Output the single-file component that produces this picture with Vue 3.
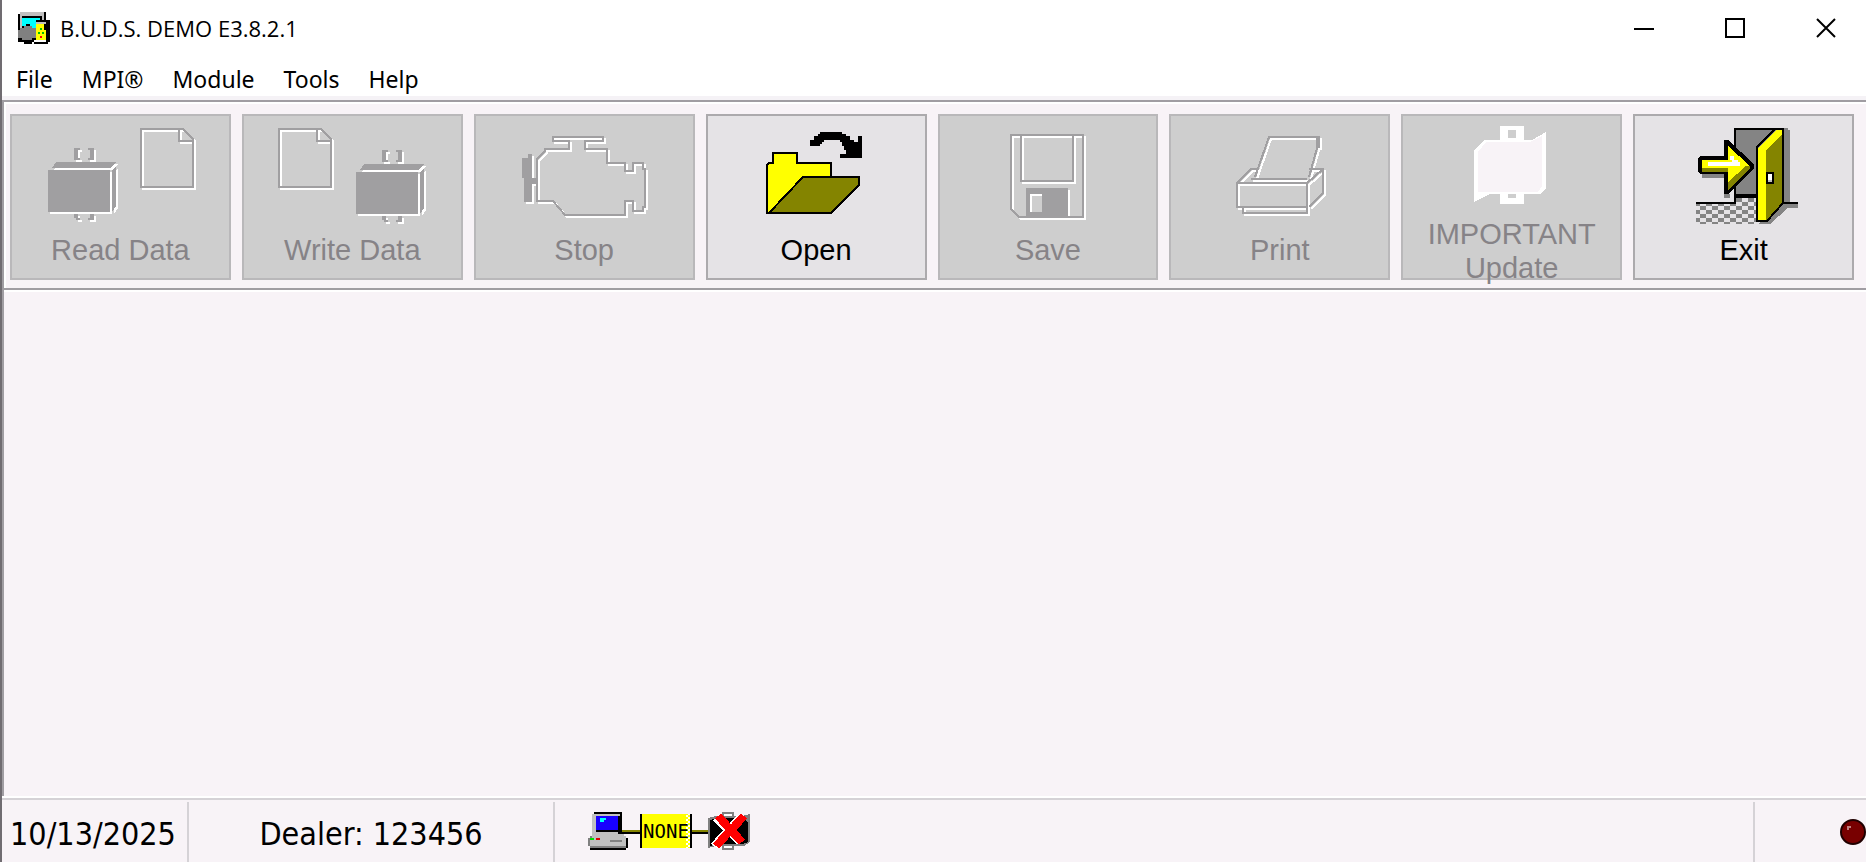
<!--
  App.vue: B.U.D.S. main window
  title bar, menu, toolbar, empty workspace and status bar
-->

<template>
  <div class="window">
    <!-- title bar -->
    <header class="title-bar">
      <svg class="app-icon" viewBox="0 0 16 16" shape-rendering="crispEdges" aria-hidden="true">
        <path fill="#000" d="M0 1H1V0H14V4H16V15H15V16H8V15H7V16H3V15H0Z" />
        <path fill="#c0c0c0" d="M1 0H13V4H12V2H2V8H1Z" />
        <path fill="#00ffff" d="M2 3H11V4H9V8H6V6H4V7H2Z" />
        <path fill="#808080" d="M1 8H3V7H7V8H9V13H7V14H2V13H0V9H1Z" />
        <path fill="#c0c0c0" d="M9 5H14V6H9Z" />
        <path fill="#ffff00" d="M9 6H13V9H14V14H9Z" />
        <path fill="#fff" d="M8 14H14V15H8Z" />
        <path fill="#00c000" d="M11 8H12V9H11ZM10 10H11V11H10ZM12 10H13V11H12Z" />
        <path fill="#ff0000" d="M11 12H12V13H11Z" />
      </svg>
      <h1>B.U.D.S. DEMO E3.8.2.1</h1>
      <div class="window-controls">
        <button type="button" aria-label="Minimize">
          <svg viewBox="0 0 20 20" shape-rendering="crispEdges"><path d="M0 11H20" /></svg>
        </button>
        <button type="button" aria-label="Maximize">
          <svg viewBox="0 0 20 20" shape-rendering="crispEdges"><path d="M1 1H19V19H1Z" /></svg>
        </button>
        <button type="button" aria-label="Close">
          <svg viewBox="0 0 20 20"><path d="M1 1L19 19M19 1L1 19" /></svg>
        </button>
      </div>
    </header>

    <!-- menu -->
    <nav class="menu-bar">
      <button v-for="item in menuItems" :key="item" type="button">{{ item }}</button>
    </nav>

    <!-- toolbar -->
    <div class="toolbar">
      <button
        v-for="tool in tools"
        :key="tool.key"
        type="button"
        class="tool"
        :class="{ 'two-lines': tool.key === 'update' }"
        :disabled="!tool.enabled"
      >
        <svg class="tool-icon" viewBox="1 1 108 56" shape-rendering="crispEdges" aria-hidden="true">
          <!-- disabled glyphs: white copy one step down-right, gray on top -->
          <template v-if="tool.parts">
            <g
              v-for="(part, i) in tool.parts"
              :key="i"
              :transform="`translate(${part.x} ${part.y})`"
            >
              <g class="emboss-light" transform="translate(1 1)">
                <path class="solid" :d="part.glyph.solid" />
                <path class="line" :d="part.glyph.line" />
              </g>
              <g class="emboss-dark">
                <path class="solid" :d="part.glyph.solid" />
                <path class="line" :d="part.glyph.line" />
              </g>
            </g>
          </template>

          <g v-else-if="tool.key === 'open'" stroke="#000">
            <path fill="#ffff00" d="M30.5 49.5V25.5L31.5 24.5H33.5V19.5H45.5V24.5H62.5V31.5H48.5L31.5 49.5Z" />
            <path fill="#848400" d="M31.5 49.5L48.5 31.5H76.5V35.5L62.5 49.5Z" />
            <path
              fill="#000"
              stroke="none"
              d="M52 16V13H54V11H56V10H57V9H68V10H70V11H72V13H74V14H76V11H78V22H67V20H70V18H69V16H68V14H67V13H59V14H58V15H57V16Z"
            />
          </g>

          <g v-else-if="tool.key === 'update'" fill-rule="evenodd">
            <path
              fill="#fff"
              d="M49 6H61V13H65L72 9V37L69 40H61V45H49V40H44L36 44V18L41 13H49ZM53 8V12H57V8ZM53 40V42H57V40Z"
            />
            <path fill="#f8f3f7" d="M38 19L42 14H64L70 11V36L68 39H38Z" />
          </g>

          <g v-else>
            <defs>
              <pattern id="floor" width="6" height="4" patternUnits="userSpaceOnUse">
                <path fill="#e5e3e6" d="M0 0H6V4H0Z" />
                <path fill="#848484" d="M0 0H3V2H0ZM3 2H6V4H3Z" />
              </pattern>
            </defs>
            <path fill="url(#floor)" d="M31 45H51V42H62V55H31Z" />
            <path fill="#848484" d="M75 7H77V8H78V44H82V47H77L68 55H62L75 44Z" />
            <path fill="#848484" stroke="#000" d="M50.5 44.5V7.5H74.5V40.5H50.5" />
            <path fill="#000" d="M51 40H62V42H51ZM31 44H51V45H31ZM75 44H82V45H75Z" />
            <!-- door -->
            <path fill="#848400" d="M66 17L74 8V45L66 53Z" />
            <path fill="#ffff00" d="M62 17L71 8H74V10L66 18V53H62Z" />
            <path fill="none" stroke="#000" d="M61.5 53.5V16.5L70.5 7.5H74.5V44.5L66.5 53.5Z" />
            <path fill="#000" d="M66 29H70V35H66Z" />
            <path fill="#fff" d="M67 30H69V33H67Z" />
            <path fill="#c0c0c0" d="M67 33H69V34H67Z" />
            <!-- arrow -->
            <path fill="#848484" d="M34 30H45V32H34ZM45 40H48V42H45Z" />
            <path fill="#000" d="M32 22L33 21H45V13H47L60 25V27L47 40H45V30H33L32 29Z" />
            <path fill="#ffff00" d="M34 23H47V16L58 26L47 37V28H34Z" />
            <path fill="#848400" d="M34 27H47V34L56 26H58V27L47 38V29H34Z" />
            <path fill="#fff" d="M37 24H49V23H48V21H50V23H52V24H53V26H37Z" />
          </g>
        </svg>
        <span class="tool-label">{{ tool.label }}</span>
      </button>
    </div>

    <main class="workspace"></main>

    <!-- status bar -->
    <footer class="status-bar">
      <div class="panel date">10/13/2025</div>
      <div class="panel dealer">Dealer: 123456</div>
      <div class="panel connection">
        <svg class="computer" viewBox="0 0 26 19" shape-rendering="crispEdges" aria-hidden="true">
          <path fill="#c0c0c0" d="M2 1H17V11H2Z" />
          <path fill="#000" d="M3 0H17V11H4V10H16V1H3ZM4 2H16V10H4Z" />
          <path fill="#1800ff" d="M4 2H15V9H4Z" />
          <path fill="#00ffff" d="M6 3H9V4H8V5H6Z" />
          <path fill="#c0c0c0" d="M2 10H15V11H2Z" />
          <path fill="#808080" d="M1 12H19V18H1ZM0 13H1V17H0Z" />
          <path fill="#c0c0c0" d="M2 11H18V12H19V17H1V13H2Z" />
          <path fill="#000" d="M19 13H20V18H19V19H1V18H19Z" />
          <path fill="#00e000" d="M1 13H3V14H1Z" />
          <path fill="#e00000" d="M4 13H6V14H4Z" />
          <path fill="#808080" d="M11 14H17V15H11Z" />
          <path fill="#848400" d="M17 9H26V10H17Z" />
          <path fill="#000" d="M17 10H26V11H17Z" />
        </svg>
        <span class="adapter">NONE</span>
        <svg class="module" viewBox="0 0 29 19" shape-rendering="crispEdges" aria-hidden="true">
          <path fill="#848400" d="M0 9H8V10H0Z" />
          <path fill="#000" d="M0 10H8V11H0Z" />
          <path fill="#808080" d="M8 3L12 2H25L29 1V15L26 17H12L8 18Z" />
          <path fill="#000" d="M9 4L12 3H25L28 5V15L25 16H12L9 17Z" />
          <path fill="#808080" d="M15 0H21V3H15ZM15 16H21V19H15Z" />
          <path fill="#fff" d="M16 1H20V2H16ZM16 17H20V18H16Z" />
          <path stroke="#fff" stroke-width="4" d="M12 3L24 15M24 3L11 17" />
          <path stroke="#ff0000" stroke-width="4" d="M13 2L25 15M26 2L12 17" />
        </svg>
      </div>
      <div class="panel led">
        <svg viewBox="0 0 26 28" role="img" aria-label="Communication">
          <circle cx="13" cy="14" r="12" fill="#780000" stroke="#200000" stroke-width="2" />
          <path fill="#c08080" d="M7 8H11V10H9V12H7Z" />
        </svg>
      </div>
    </footer>
  </div>
</template>

<script setup>
const menuItems = ['File', 'MPI®', 'Module', 'Tools', 'Help']

// Glyphs are drawn on a grid where one unit is two pixels
const page = {
  solid: '',
  line: 'M.5 .5H21.5L26.5 5.5V29.5H.5ZM19.5 .5V6.5H26.5'
}

const chip = {
  solid:
    'M4 7H34L31 10H2ZM0 11H31V32H0ZM32 11L34 9V29L32 32Z' +
    'M13 0H16V1H15V5H16V6H13ZM20 0H23V6H20V5H21V1H20Z' +
    'M13 33H15V35H16V36H14V35H13ZM21 33H23V36H20V35H21Z',
  line: ''
}

const engine = {
  solid: 'M27 20H29V32H31V35H29V44H25V32H24V22H27Z',
  line:
    'M39.5 11.5H64.5V13.5H55.5V17.5H66.5V24.5H75.5V28.5H79.5V24.5H84.5V27.5H85.5V46.5H84.5V48.5' +
    'H79.5V43.5H75.5V50.5H45.5L39.5 43.5H31.5V22.5L35.5 18.5V17.5H47.5V13.5H39.5Z'
}

const floppy = {
  solid: 'M44 37H65V51H44ZM46 40V49H52V40Z',
  line: 'M36.5 10.5H72.5V51.5H40.5L36.5 47.5ZM41.5 10.5V33.5H67.5V10.5'
}

const printer = {
  solid: 'M73 12H75V17H73Z',
  line:
    'M33.5 34.5H68.5V46.5H33.5ZM36.5 46.5V49.5H68.5V46.5M33.5 34.5L40.5 27.5H43.5M40.5 32.5H68.5' +
    'M42.5 31.5L49.5 11.5H74.5V13.5L69.5 31.5M69.5 27.5H76.5V39.5L69.5 46.5M68.5 34.5L76.5 27.5'
}

const tools = [
  { key: 'read', label: 'Read Data', parts: [{ glyph: chip, x: 19, y: 17 }, { glyph: page, x: 65, y: 7 }] },
  { key: 'write', label: 'Write Data', parts: [{ glyph: page, x: 18, y: 7 }, { glyph: chip, x: 57, y: 18 }] },
  { key: 'stop', label: 'Stop', parts: [{ glyph: engine, x: 0, y: 0 }] },
  { key: 'open', label: 'Open', enabled: true },
  { key: 'save', label: 'Save', parts: [{ glyph: floppy, x: 0, y: 0 }] },
  { key: 'print', label: 'Print', parts: [{ glyph: printer, x: 0, y: 0 }] },
  { key: 'update', label: 'IMPORTANT Update' },
  { key: 'exit', label: 'Exit', enabled: true }
]
</script>

<style>
body {
  margin: 0;
}
</style>

<style scoped>
.window {
  display: flex;
  flex-direction: column;
  box-sizing: border-box;
  height: 100vh;
  min-width: 1200px;
  border-left: 2px solid #706c71;
  background: #f8f3f7;
  color: #000;
  overflow: hidden;
}

button {
  margin: 0;
  padding: 0;
  border: 0;
  background: none;
  color: inherit;
  font: inherit;
}

/* ---------- title bar ---------- */
.title-bar {
  display: flex;
  align-items: center;
  height: 56px;
  padding-left: 16px;
  background: #fff;
}

.app-icon {
  width: 32px;
  height: 32px;
}

.title-bar h1 {
  flex: 1;
  margin: 0 0 0 10px;
  font: 400 22px/32px 'Open Sans', 'Noto Sans', sans-serif;
}

.window-controls {
  display: flex;
  gap: 11px;
}

.window-controls button {
  display: flex;
  align-items: center;
  justify-content: center;
  width: 80px;
  height: 56px;
}

.window-controls svg {
  width: 20px;
  height: 20px;
  fill: none;
  stroke: #000;
  stroke-width: 2px;
}

/* ---------- menu ---------- */
.menu-bar {
  display: flex;
  gap: 29px;
  height: 40px;
  padding-left: 14px;
  border-bottom: 4px solid #f5f2f6;
  background: #fff;
  font: 400 23px/46px 'Noto Sans', 'Open Sans', sans-serif;
}

/* ---------- toolbar ---------- */
.toolbar {
  display: grid;
  grid-template-columns: repeat(8, 1fr);
  gap: 11px;
  padding: 12px 12px 8px 6px;
  border-top: 2px solid #a09da2;
  border-bottom: 2px solid #a09da2;
  border-left: 2px solid #a09da2;
  box-shadow: inset 2px 2px #fff, 0 2px #fff;
}

.tool {
  display: grid;
  grid-template-rows: 162px;
  grid-template-columns: 1fr;
  justify-items: center;
  align-items: start;
  box-sizing: border-box;
  height: 166px;
  border: 2px solid #acaaad;
  background: #e5e3e6;
  font: 400 29px/34px 'Liberation Sans', Arial, sans-serif;
}

.tool:disabled {
  border-color: #b9b8ba;
  background: #cecece;
  color: #868387;
}

.tool-icon,
.tool-label {
  grid-area: 1 / 1;
}

.tool-icon {
  width: 216px;
  height: 112px;
}

.tool-label {
  width: 180px;
  margin-top: 117px;
}

.two-lines .tool-label {
  margin-top: 101px;
}

.solid {
  fill-rule: evenodd;
}

.line {
  fill: none;
}

.emboss-light .solid {
  fill: #fff;
}

.emboss-light .line {
  stroke: #fff;
}

.emboss-dark .solid {
  fill: #a09fa1;
}

.emboss-dark .line {
  stroke: #a09fa1;
}

/* ---------- workspace ---------- */
.workspace {
  flex: 1;
  border-left: 2px solid #a09da2;
}

/* ---------- status bar ---------- */
.status-bar {
  display: flex;
  height: 60px;
  box-sizing: content-box;
  padding-top: 2px;
  border-top: 2px solid #d5d2d6;
  box-shadow: 0 -2px #fff;
  font: 400 32px/64px 'DejaVu Sans Condensed', Tahoma, 'Noto Sans', sans-serif;
  white-space: nowrap;
}

.panel {
  box-sizing: border-box;
  border-right: 2px solid #d5d2d6;
}

.date {
  width: 187px;
  padding-left: 8px;
}

.dealer {
  width: 366px;
  text-align: center;
}

.connection {
  display: flex;
  flex: 1;
  align-items: flex-start;
  padding: 10px 0 0 33px;
}

.computer {
  width: 52px;
  height: 38px;
}

.adapter {
  box-sizing: border-box;
  width: 52px;
  height: 34px;
  margin-top: 2px;
  border: 0 solid #000;
  border-width: 0 2px;
  background: repeating-conic-gradient(#fff 0 25%, #ffff00 0 50%) right / 4px 4px repeat-y, #ffff00;
  font: 400 19px/34px 'DejaVu Sans Mono', monospace;
  text-align: center;
}

.module {
  width: 58px;
  height: 38px;
}

.led {
  display: flex;
  justify-content: flex-end;
  width: 111px;
  padding-top: 16px;
  border-right: 0;
}

.led svg {
  width: 26px;
  height: 28px;
}
</style>
